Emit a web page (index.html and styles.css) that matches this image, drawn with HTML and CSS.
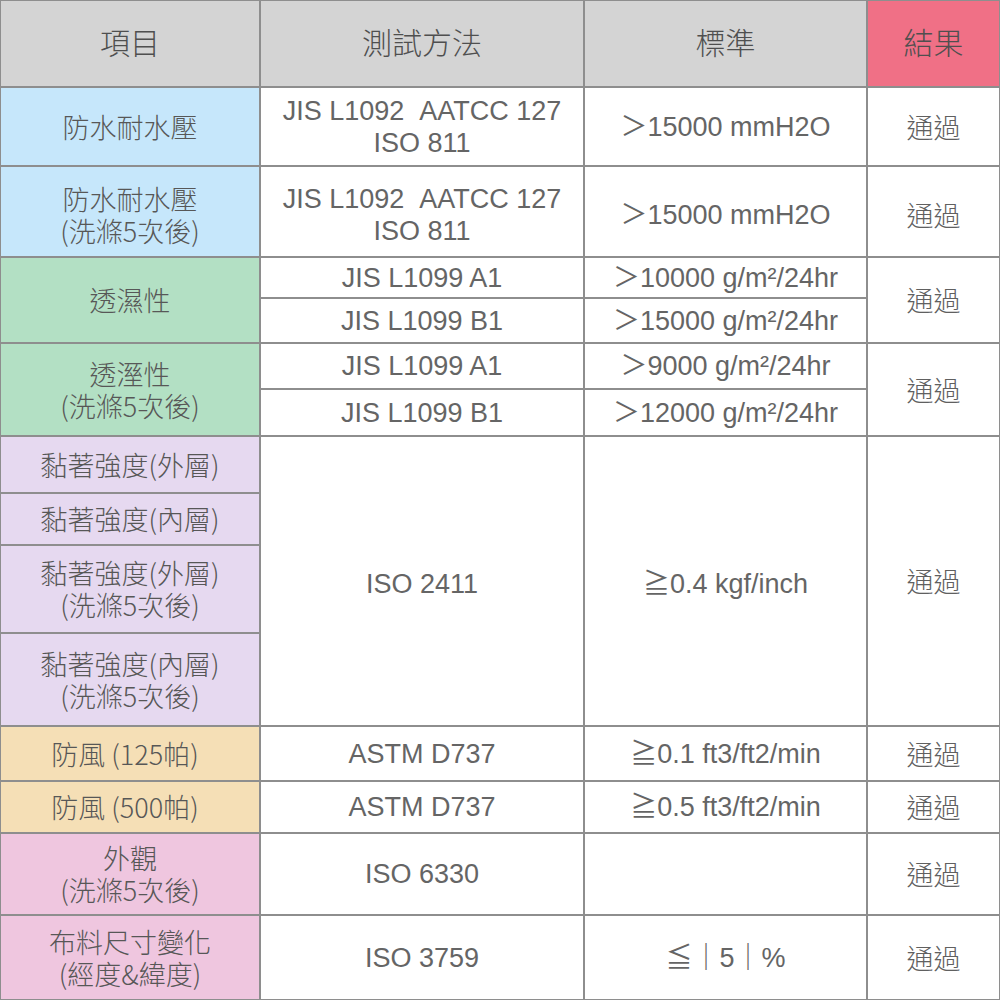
FILE: index.html
```html
<!DOCTYPE html>
<html lang="zh-Hant">
<head>
<meta charset="utf-8">
<title>測試結果</title>
<link rel="stylesheet" href="styles.css">
</head>
<body>
<div class="sheet">
  <div class="cell head">項目</div>
  <div class="cell head">測試方法</div>
  <div class="cell head">標準</div>
  <div class="cell head result">結果</div>

  <div class="cell item blue">防水耐水壓</div>
  <div class="cell latin">JIS L1092&nbsp;&nbsp;AATCC 127<br>ISO 811</div>
  <div class="cell latin">＞15000 mmH2O</div>
  <div class="cell pass">通過</div>

  <div class="cell item blue low">防水耐水壓<br>(洗滌5次後)</div>
  <div class="cell latin low">JIS L1092&nbsp;&nbsp;AATCC 127<br>ISO 811</div>
  <div class="cell latin low">＞15000 mmH2O</div>
  <div class="cell pass low">通過</div>

  <div class="cell item green rs2">透濕性</div>
  <div class="cell latin">JIS L1099 A1</div>
  <div class="cell latin">＞10000 g/m²/24hr</div>
  <div class="cell pass rs2">通過</div>
  <div class="cell latin">JIS L1099 B1</div>
  <div class="cell latin">＞15000 g/m²/24hr</div>

  <div class="cell item green rs2">透溼性<br>(洗滌5次後)</div>
  <div class="cell latin">JIS L1099 A1</div>
  <div class="cell latin">＞9000 g/m²/24hr</div>
  <div class="cell pass rs2">通過</div>
  <div class="cell latin">JIS L1099 B1</div>
  <div class="cell latin">＞12000 g/m²/24hr</div>

  <div class="cell item purple">黏著強度(外層)</div>
  <div class="cell latin rs4 low">ISO 2411</div>
  <div class="cell latin rs4 low">≧0.4 kgf/inch</div>
  <div class="cell pass rs4">通過</div>
  <div class="cell item purple">黏著強度(內層)</div>
  <div class="cell item purple">黏著強度(外層)<br>(洗滌5次後)</div>
  <div class="cell item purple">黏著強度(內層)<br>(洗滌5次後)</div>

  <div class="cell item tan left">防風 (125帕)</div>
  <div class="cell latin">ASTM D737</div>
  <div class="cell latin">≧0.1 ft3/ft2/min</div>
  <div class="cell pass">通過</div>

  <div class="cell item tan left">防風 (500帕)</div>
  <div class="cell latin">ASTM D737</div>
  <div class="cell latin">≧0.5 ft3/ft2/min</div>
  <div class="cell pass">通過</div>

  <div class="cell item pink">外觀<br>(洗滌5次後)</div>
  <div class="cell latin">ISO 6330</div>
  <div class="cell latin"></div>
  <div class="cell pass">通過</div>

  <div class="cell item pink">布料尺寸變化<br>(經度&amp;緯度)</div>
  <div class="cell latin">ISO 3759</div>
  <div class="cell latin">≦｜5｜%</div>
  <div class="cell pass">通過</div>
</div>
</body>
</html>
```
FILE: styles.css
```css
html, body {
  margin: 0;
  padding: 0;
  background: #ffffff;
}

.sheet {
  width: 1000px;
  height: 1000px;
  box-sizing: border-box;
  padding: 1px;
  background: #8e8e8e;
  display: grid;
  gap: 2px;
  grid-template-columns: 258px 322px 281px 131px;
  grid-template-rows: 85px 77px 89px 39px 43px 44px 45px 55px 50px 86px 91px 53px 50px 80px 83px;
}

.cell {
  background: #ffffff;
  display: flex;
  align-items: center;
  justify-content: center;
  text-align: center;
  color: #575757;
  line-height: 32px;
  font-family: "Noto Sans CJK TC", "Noto Sans CJK JP", sans-serif;
  font-weight: 300;
  font-size: 27px;
}

.rs2 { grid-row: span 2; }
.rs4 { grid-row: span 4; }

.low { padding-top: 6px; }

.left { padding-right: 10px; }

.head {
  background: #d4d4d4;
  font-size: 30px;
  color: #4f4f4f;
  padding-bottom: 6px;
}

.head.result {
  background: #f07086;
}

.latin {
  font-family: "Liberation Sans", "Noto Sans CJK TC", sans-serif;
  font-weight: 400;
  font-size: 27px;
  color: #656565;
}

.pass {
  color: #606060;
}

.blue { background: #c6e7fb; }
.green { background: #b3e0c4; }
.purple { background: #e6d9f0; }
.tan { background: #f5dfb6; }
.pink { background: #efc6df; }
```
